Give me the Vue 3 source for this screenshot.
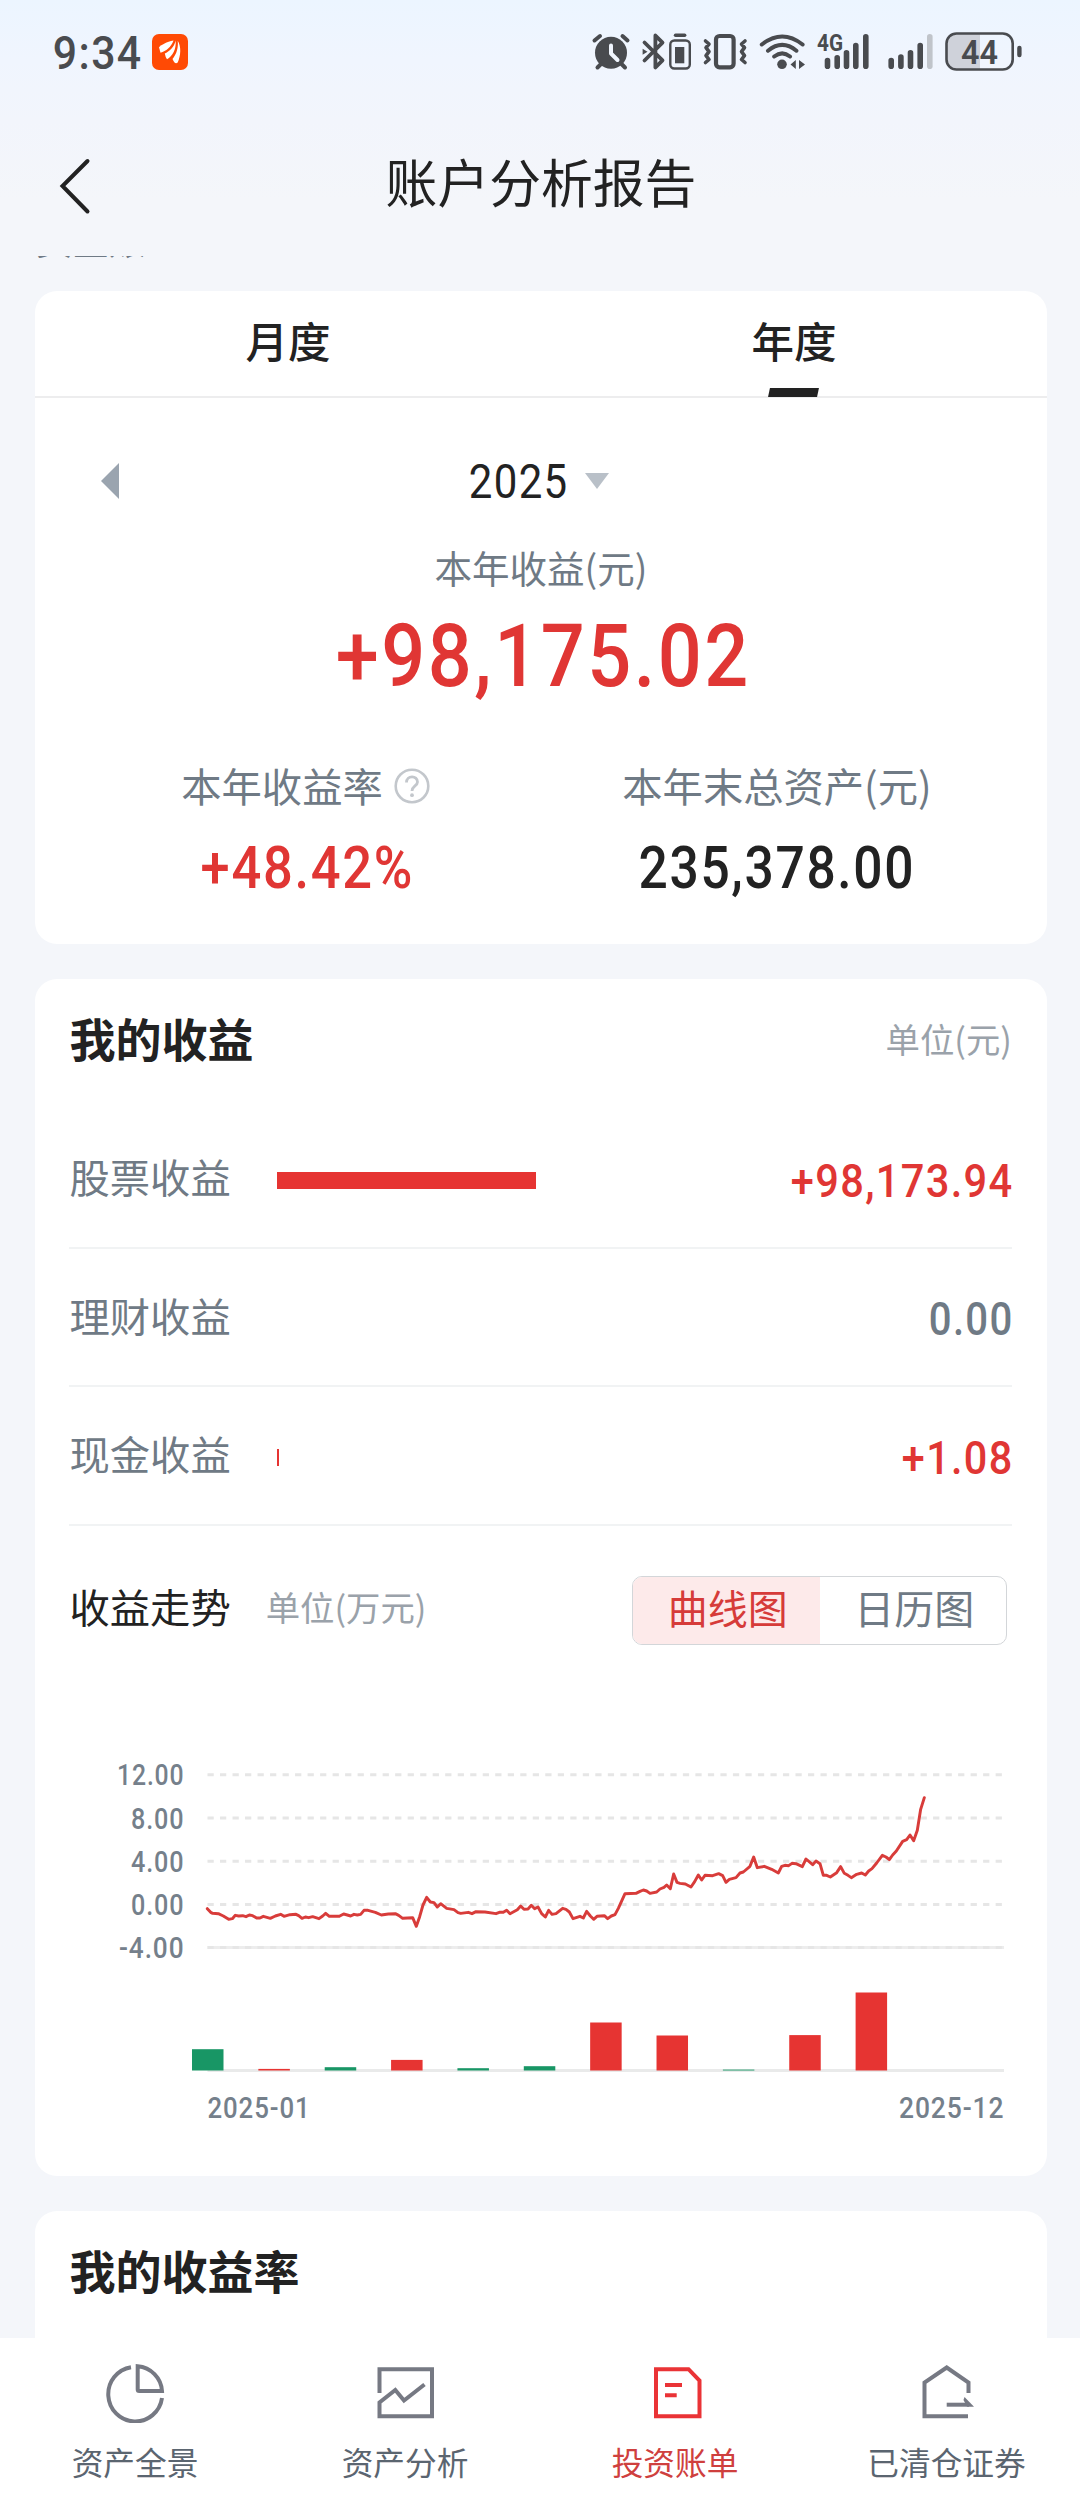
<script setup>
import { h } from 'vue'

// Numeric label whose box is exactly its digit height and its drawn width.
const Num = (p) => {
  const b = p.cap * 0.035
  const gap = p.cap * 0.045
  return h('svg', { width: p.w, height: p.cap, style: 'overflow:visible;display:block;flex:none' }, [
    h('text', {
      x: -b, y: p.cap, 'font-size': p.cap / 0.711, 'font-weight': p.weight || 500,
      'font-family': 'Roboto, sans-serif', fill: 'currentColor', 'letter-spacing': gap,
      textLength: p.w + 2 * b + gap * 0.9, lengthAdjust: 'spacingAndGlyphs',
    }, p.text),
  ])
}
Num.props = ['text', 'w', 'cap', 'weight']

const rows = [
  { name: '股票收益', bar: 259, text: '+98,173.94', w: 219, tone: 'up' },
  { name: '理财收益', bar: 0, text: '0.00', w: 81, tone: 'flat' },
  { name: '现金收益', bar: 2, text: '+1.08', w: 108, tone: 'up' },
]

const axis = [
  { text: '12.00', x: 47, w: 65, y: 24.7 },
  { text: '8.00', x: 61, w: 51, y: 68 },
  { text: '4.00', x: 61, w: 51, y: 111.2 },
  { text: '0.00', x: 61, w: 51, y: 154.4 },
  { text: '-4.00', x: 49, w: 63, y: 197.6 },
]

const months = [-21.3, 1.6, -3.3, 10.6, -2.3, -4.3, 48, 35, -0.9, 35.4, 78]

const trend = '382,506 392,517 398,520 415,521 430,528 446,538 457,536 466,526 476,528 488,527 498,530 508,525 518,527 530,534 540,534 550,529 571,535 586,528 602,523 612,529 630,524 648,523 656,527 666,535 676,531 686,533 698,530 717,536 728,528 737,520 748,529 778,529 791,522 802,525 812,528 822,523 832,525 842,523 852,511 864,511 886,517 904,525 925,522 946,521 956,526 968,535 998,533 1009,559 1019,530 1029,495 1040,472 1051,486 1062,488 1072,501 1082,491 1100,505 1122,509 1134,518 1142,520 1165,517 1176,521 1188,515 1215,516 1248,521 1258,517 1270,517 1280,511 1290,521 1312,509 1322,498 1332,508 1344,507 1354,496 1364,506 1374,501 1385,521 1396,531 1406,511 1416,523 1428,521 1448,505 1458,508 1468,516 1479,536 1500,529 1510,534 1520,514 1531,528 1541,538 1551,529 1573,527 1583,536 1594,528 1605,524 1615,505 1635,461 1668,460 1680,454 1690,450 1700,453 1710,460 1730,456 1740,447 1752,442 1760,435 1771,446 1781,402 1791,427 1800,430 1816,432 1833,441 1844,425 1855,405 1865,420 1875,406 1898,407 1916,401 1928,407 1938,427 1948,418 1968,413 1980,399 1990,396 2010,379 2021,351 2032,383 2053,379 2075,388 2095,399 2105,379 2115,376 2126,377 2136,370 2148,371 2167,380 2178,357 2198,374 2208,363 2220,371 2230,406 2240,406 2251,411 2270,398 2282,380 2293,400 2304,406 2314,413 2330,403 2345,399 2356,405 2366,393 2376,386 2390,369 2407,346 2418,351 2428,359 2438,345 2449,333 2468,304 2480,299 2490,285 2501,302 2512,271 2522,208 2533,173'
</script>

<template>
  <div class="screen">
    <header class="status">
      <div class="clock">
        <Num text="9:34" :w="86" :cap="33.5" />
        <svg class="app" width="36" height="36" viewBox="0 0 36 36">
          <rect width="36" height="36" rx="7" fill="#ff4a05" />
          <g fill="#fff">
            <path d="M21.5 6.5C14.500 7.500 9.500 11 7 13.200L8.500 18.800C14 17 19 13.500 21.500 6.500Z" />
            <path d="M23.600 6.500C22.500 13 17 17.500 12.800 19.500Q13.500 23.500 15 25.200C20.500 22.500 24.500 15 23.600 6.500Z" />
            <path d="M25.700 6.800C29.500 12.500 28.800 22 25.700 28.500Q23 31 20.500 25C24.800 20 26.500 13 25.700 6.800Z" />
          </g>
        </svg>
      </div>
      <svg class="indicators" width="440" height="48" viewBox="0 0 440 48" fill="none" stroke="#494b4f" stroke-linecap="round" stroke-linejoin="round">
        <g stroke-width="4">
          <circle cx="23" cy="24.700" r="16" fill="#494b4f" stroke="none" />
          <path d="M6.500 12.500L12 8M34.500 8L39.500 12.500M9.500 39.500L13 36M37 39.500L33.500 36" />
          <path d="M23 17.500V25.500L29.500 32" stroke="#f0f5fe" />
        </g>
        <path d="M56.500 14.500L74.500 32.300L67.400 39.500V7.500L74.500 14.700L56.500 32.500" stroke-width="3.800" />
        <path d="M54.600 20.700L59.500 23.700L54.600 26.700Z" fill="#494b4f" stroke="none" />
        <rect x="82.300" y="12.500" width="19.500" height="28" rx="4" stroke-width="2.400" />
        <path d="M87 19h9.300v16.300H87Z" fill="#494b4f" stroke="none" />
        <path d="M87.500 7.200H96.700" stroke-width="3.400" />
        <rect x="128" y="8" width="17.600" height="31.300" rx="3.500" stroke-width="4.200" />
        <path d="M117.500 13L121 16L118 19.700L121 23.700L118 27.700L121 31.500L117.500 34.500M157 13L153.500 16L156.500 19.700L153.500 23.700L156.500 27.700L153.500 31.500L157 34.500" stroke-width="3.600" />
        <g stroke-width="4">
          <path d="M173.800 16.500Q194.200 0.500 214.600 16.500M180 22.700Q194.200 11 208.400 22.700M186.200 28.500Q194.200 22.200 202 28.500" />
          <circle cx="194" cy="36.300" r="4.800" fill="#494b4f" stroke="none" />
        </g>
        <path d="M202.500 36.500L207.800 32V41ZM217 36.500L211 32V41Z" fill="#494b4f" stroke="none" />
        <text x="229" y="23" textLength="26" lengthAdjust="spacingAndGlyphs" class="glyph" font-size="23" font-weight="700">4G</text>
        <path d="M239.500 32.500V38.300M249.200 29.700V38.300M258.500 24.700V38.300M267.800 17.500V38.300M277.800 8.700V38.300M303.200 32.500V38.300M312.900 29V38.300M322.500 24.700V38.300M332.200 17.500V38.300" stroke-width="5.600" />
        <path d="M341.800 8.700V38.300" stroke="#c0c4ca" stroke-width="5.600" />
        <path d="M392 6H369Q359 6 359 16V31Q359 41 369 41H392Z" fill="#cfd2da" stroke="none" />
        <rect x="358.500" y="5.500" width="66.200" height="36" rx="10" stroke-width="2.600" />
        <path d="M431.400 20V27" stroke-width="4.400" />
        <text x="373" y="35.700" textLength="37" lengthAdjust="spacingAndGlyphs" class="glyph" font-size="32.500" font-weight="600">44</text>
      </svg>
    </header>

    <div class="titlebar">
      <svg class="back" width="34" height="60" viewBox="0 0 34 60" fill="none" stroke="#222" stroke-width="4" stroke-linecap="round">
        <path d="M29.500 5L4.500 30L29.500 55.500" />
      </svg>
      <h1>账户分析报告</h1>
    </div>
    <div class="scrolled"><span>资金账</span></div>

    <main>
      <section class="card summary">
        <div class="tabs">
          <div class="tab">月度</div>
          <div class="tab on">年度</div>
        </div>
        <div class="year">
          <svg class="prev" width="18" height="36" viewBox="0 0 18 36"><path d="M18 0V36L0 18Z" fill="#9aa4af" /></svg>
          <Num text="2025" :w="96" :cap="34" :weight="400" />
          <svg class="drop" width="24" height="16" viewBox="0 0 24 16"><path d="M0 0H24L12 16Z" fill="#b9c0c8" /></svg>
        </div>
        <div class="label small">本年收益(元)</div>
        <div class="total up"><Num text="+98,175.02" :w="408" :cap="62" /></div>
        <div class="pair">
          <div class="cell">
            <div class="label">本年收益率
              <svg class="help" width="36" height="36" viewBox="0 0 36 36" fill="none" stroke="#c3c7cc" stroke-width="2.600">
                <circle cx="18" cy="18" r="16.300" />
                <path d="M12.500 14.500C12.500 7 23.500 7 23.500 14C23.500 18 18 18 18 23" stroke-width="2.800" />
                <circle cx="18" cy="27.200" r="1.900" fill="#c3c7cc" stroke="none" />
              </svg>
            </div>
            <div class="up"><Num text="+48.42%" :w="209" :cap="41.5" /></div>
          </div>
          <div class="cell">
            <div class="label wide">本年末总资产(元)</div>
            <Num text="235,378.00" :w="272" :cap="41.5" />
          </div>
        </div>
      </section>

      <section class="card income">
        <div class="head">
          <h2>我的收益</h2>
          <span class="unit">单位(元)</span>
        </div>
        <div v-for="r in rows" :key="r.name" class="row">
          <span class="name">{{ r.name }}</span>
          <div class="track"><i v-if="r.bar" :style="{ width: r.bar + 'px' }"></i></div>
          <div :class="r.tone"><Num :text="r.text" :w="r.w" :cap="33.5" /></div>
        </div>
        <div class="trend">
          <h3>收益走势</h3>
          <span class="unit">单位(万元)</span>
          <div class="switch">
            <div class="opt on">曲线图</div>
            <div class="opt">日历图</div>
          </div>
        </div>
        <svg class="chart" width="941" height="380" viewBox="0 0 941 380" fill="none">
          <g v-for="a in axis" :key="a.text">
            <text :x="a.x - 1" :y="a.y + 10.5" :textLength="a.w + 2.500" lengthAdjust="spacingAndGlyphs" class="tick">{{ a.text }}</text>
            <path v-if="a.text === '-4.00'" :d="`M136.500 ${a.y}H933`" stroke="#ededed" stroke-width="3" />
            <path :d="`M136.500 ${a.y}H933`" stroke="#e6e6e6" stroke-width="3" stroke-dasharray="6.250 6.260" />
          </g>
          <path d="M136.500 320.600H933" stroke="#e9eaea" stroke-width="3" />
          <rect v-for="(m, i) in months" :key="i" :x="121 + i * 66.360" :y="320.500 - Math.abs(m)" width="31.500" :height="Math.abs(m)" :fill="m > 0 ? '#e63432' : '#189665'" />
          <g transform="translate(9 -10) scale(.33333)">
            <polyline :points="trend" stroke="#d83c3a" stroke-width="8.800" stroke-linejoin="round" stroke-linecap="round" />
          </g>
          <text x="136.500" y="368" textLength="103" lengthAdjust="spacingAndGlyphs" class="tick">2025-01</text>
          <text x="828" y="368" textLength="105.500" lengthAdjust="spacingAndGlyphs" class="tick">2025-12</text>
        </svg>
      </section>

      <section class="card rate">
        <div class="head"><h2>我的收益率</h2></div>
      </section>
    </main>

    <nav>
      <div class="item">
        <svg width="60" height="60" viewBox="0 0 60 60"><path d="M26 4.200A27 27.300 0 1 0 57 35" /><path d="M32.700 3.200A26.500 26.500 0 0 1 57 28H34.200Q32.700 28 32.700 26.500Z" /></svg>
        <span>资产全景</span>
      </div>
      <div class="item">
        <svg width="60" height="60" viewBox="0 0 60 60"><path d="M4.500 30V6.200H57V53.300H4.500V39.500L20.300 27L29 37.500L49.500 21.500" /></svg>
        <span>资产分析</span>
      </div>
      <div class="item on">
        <svg width="60" height="60" viewBox="0 0 60 60"><path d="M11 6.200H43.500L54.500 17.500V53.300H11Z" /><path d="M20 22H37M20 32.300H31.700" /></svg>
        <span>投资账单</span>
      </div>
      <div class="item">
        <svg width="60" height="60" viewBox="0 0 60 60"><path d="M53 53.300H9.500V19.500L31.700 4.500L53.500 19.500V30" /><path d="M31.700 41.700H54" /><path d="M49.500 34L59 43.700H52L48.500 37Z" fill="#767983" stroke="none" /></svg>
        <span>已清仓证券</span>
      </div>
    </nav>
  </div>
</template>

<style>
body { margin: 0; }
</style>

<style scoped>
.screen {
  width: 1080px;
  height: 2504px;
  overflow: hidden;
  display: flex;
  flex-direction: column;
  background: linear-gradient(#ecf5ff 0, #f0f5fe 60px, #f2f5fc 120px, #f4f6fa 200px, #f4f6fa 300px);
  font-family: "Noto Sans CJK SC", sans-serif;
  color: #222;
}
h1, h2, h3 { margin: 0; }
.status {
  height: 80px;
  flex: none;
  display: flex;
  justify-content: space-between;
  padding: 28px 52px 0 54px;
  box-sizing: border-box;
}
.clock { display: flex; padding-top: 7px; color: #494b4f; }
.app { margin: -1px 0 0 12px; }
.glyph { font-family: Roboto, sans-serif; fill: #494b4f; stroke: none; }
.titlebar {
  height: 176px;
  flex: none;
  display: flex;
  align-items: flex-start;
  box-sizing: border-box;
  padding: 75px 58px 0;
}
.back { margin-top: 1px; }
h1 { flex: 1; margin-right: 32px; text-align: center; font-size: 51.800px; font-weight: 400; line-height: 60px; margin-top: -4px; }
.scrolled { height: 35px; flex: none; overflow: hidden; padding-left: 36px; color: #6f7a85; }
.scrolled span { display: block; font-size: 36.500px; line-height: 40px; margin-top: -36px; }
main { flex: 1; min-height: 0; overflow: hidden; padding: 0 33px 0 35px; display: flex; flex-direction: column; gap: 35px; }
.card { background: #fff; border-radius: 22px; flex: none; box-sizing: border-box; }
.summary { height: 653px; }
.tabs { display: flex; height: 107px; border-bottom: 2px solid #ededee; box-sizing: border-box; }
.tab { flex: 1; text-align: center; font-size: 42.500px; font-weight: 500; line-height: 97px; position: relative; }
.tab.on::after { content: ""; position: absolute; left: 50%; bottom: -1px; width: 49px; height: 9px; margin-left: -25px; background: #222; transform: skewX(-12deg); }
.year { height: 34px; margin-top: 66px; display: flex; align-items: center; padding-left: 66px; }
.prev { margin-right: 351px; }
.drop { margin-left: 19px; }
.label { display: flex; align-items: center; justify-content: center; gap: 12px; color: #6f7a85; font-size: 40.300px; line-height: 50px; white-space: nowrap; }
.label.small { font-size: 37.500px; margin-top: 44px; }
.label.wide { padding-left: 2px; }
.help { margin: 2px 1px 0 -1px; }
.total { display: flex; justify-content: center; margin: 32px 0 0 1px; }
.up { color: #e03634; }
.flat { color: #6f7a85; }
.pair { display: flex; padding: 0 36px; margin-top: 74px; }
.cell { flex: 1; display: flex; flex-direction: column; align-items: center; }
.cell .label { margin-bottom: 36px; }
.income { height: 1197px; padding: 0 35px 0 34.500px; }
.head { display: flex; justify-content: space-between; align-items: center; height: 120px; }
h2 { font-size: 46px; font-weight: 600; line-height: 60px; margin-top: -5px; }
.unit { font-size: 34.400px; line-height: 50px; color: #9aa2aa; margin-top: -2px; }
.row { display: flex; align-items: center; height: 138.500px; box-sizing: border-box; border-bottom: 2px solid #f1f3f4; margin-left: -0.500px; padding-left: 0.500px; }
.head + .row { margin-top: 11px; }
.name { font-size: 40.300px; line-height: 50px; color: #6f7a85; width: 207.500px; margin-top: -4px; }
.track { flex: 1; display: flex; padding-top: 4px; }
.row svg { margin: 2px 1px 0 0; }
.track i { display: block; height: 17px; background: #e63432; }
.trend { display: flex; align-items: center; height: 70px; margin-top: 50px; }
h3 { font-size: 40.300px; font-weight: 400; line-height: 50px; margin: -9px 35px 0 0; }
.trend .unit { margin-top: -9px; }
.switch { display: flex; margin: 0 5px 0 auto; width: 375px; height: 69px; box-sizing: border-box; border: 1.500px solid #d3d6d9; border-radius: 10px; overflow: hidden; }
.opt { flex: 1; text-align: center; font-size: 40px; line-height: 60px; color: #6f7a85; padding-left: 3px; }
.opt.on { background: #fdeaea; color: #d63b39; }
.chart { display: block; margin: 104px 0 0 1.500px; }
.tick { font-family: Roboto, sans-serif; font-size: 28.800px; font-weight: 500; letter-spacing: 1px; fill: #75808b; }
.rate { height: 200px; padding: 0 36px 0 34.500px; }
nav { height: 166px; flex: none; background: #fff; display: flex; }
.item { width: 270px; display: flex; flex-direction: column; align-items: center; padding-top: 25px; box-sizing: border-box; font-size: 31.700px; line-height: 40px; color: #5b6570; }
.item svg { fill: none; stroke: #767983; stroke-width: 4; }
.item span { margin-top: 18px; }
.item:last-child span { margin-left: 3px; }
.item.on { color: #cf403e; }
.item.on svg { stroke: #ea3336; }
</style>
